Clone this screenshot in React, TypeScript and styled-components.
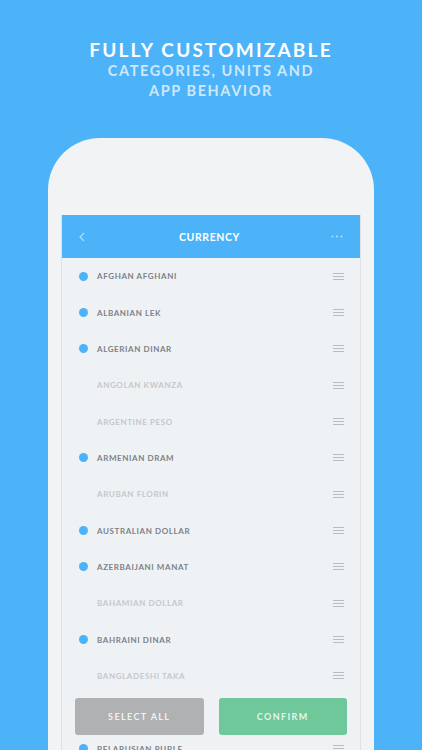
import React from 'react';
import styled, { createGlobalStyle } from 'styled-components';

const GlobalStyle = createGlobalStyle`
    html, body {
        margin: 0;
        padding: 0;
        background: #4db3f9;
    }

    body {
        font-family: Lato, "Open Sans", sans-serif;
    }
`;

const StyledPage = styled.div`
    width: 422px;
    height: 750px;
    overflow: hidden;
    background: #4db3f9;
`;

const StyledIntro = styled.header`
    padding-top: 39px;
    height: 100px;
    box-sizing: border-box;
    text-align: center;
`;

const StyledHeadline = styled.h1`
    margin: 0;
    font-size: 19px;
    font-weight: 700;
    letter-spacing: 2.2px;
    line-height: 22px;
    color: #ffffff;
`;

const StyledSubline = styled.p`
    margin: 0;
    font-size: 14.5px;
    font-weight: 700;
    letter-spacing: 1.6px;
    line-height: 19.5px;
    color: #cde8fd;
`;

const StyledPhone = styled.div`
    margin: 38px 0 0 48px;
    width: 326px;
    height: 700px;
    box-sizing: border-box;
    padding: 77px 13px 0;
    background: #f2f3f5;
    border-radius: 52px 52px 0 0;
`;

const StyledScreen = styled.div`
    position: relative;
    height: 600px;
    background: #eff2f5;
    border: 1px solid #dde1e5;
    border-top: none;
`;

const StyledNavBar = styled.div`
    height: 43px;
    display: flex;
    align-items: center;
    justify-content: space-between;
    padding: 0 16px 0 13px;
    background: #4db3f9;
    color: #ffffff;
`;

const StyledNavIcon = styled.div`
    width: 14px;
    display: flex;
    align-items: center;
    justify-content: center;
    opacity: 0.55;
`;

const StyledNavTitle = styled.div`
    font-size: 10.5px;
    font-weight: 700;
    letter-spacing: 0.6px;
`;

const StyledList = styled.ul`
    margin: 0;
    padding: 0;
    list-style: none;
`;

const StyledRow = styled.li<{ $covered?: boolean }>`
    height: 36.35px;
    display: flex;
    align-items: center;
    padding: 0 16px 0 17px;
    visibility: ${({ $covered }) => ($covered ? 'hidden' : 'visible')};
`;

const StyledDot = styled.span<{ $on: boolean }>`
    width: 9px;
    height: 9px;
    border-radius: 50%;
    margin-right: 9px;
    background: ${({ $on }) => ($on ? '#4db3f9' : 'transparent')};
`;

const StyledLabel = styled.span<{ $on: boolean }>`
    flex: 1;
    font-size: 8px;
    font-weight: 700;
    letter-spacing: 0.6px;
    color: ${({ $on }) => ($on ? '#7c8187' : '#c4c8cc')};
`;

const StyledHandle = styled.span`
    width: 11px;
    display: flex;
    flex-direction: column;
    gap: 2px;

    & > i {
        display: block;
        height: 1px;
        background: #b9bcc0;
    }
`;

const StyledActions = styled.div`
    position: absolute;
    left: 13px;
    right: 13px;
    top: 483px;
    display: flex;
    gap: 15px;
`;

const StyledButton = styled.button<{ $tone: 'grey' | 'green' }>`
    flex: 1;
    height: 37px;
    border: none;
    border-radius: 3px;
    font-family: Lato, "Open Sans", sans-serif;
    font-size: 9px;
    font-weight: 700;
    letter-spacing: 1.4px;
    color: rgba(255, 255, 255, 0.85);
    background: ${({ $tone }) => ($tone === 'grey' ? '#b0b1b3' : '#6ec899')};
`;

const currencies: [string, boolean][] = [
    ['AFGHAN AFGHANI', true],
    ['ALBANIAN LEK', true],
    ['ALGERIAN DINAR', true],
    ['ANGOLAN KWANZA', false],
    ['ARGENTINE PESO', false],
    ['ARMENIAN DRAM', true],
    ['ARUBAN FLORIN', false],
    ['AUSTRALIAN DOLLAR', true],
    ['AZERBAIJANI MANAT', true],
    ['BAHAMIAN DOLLAR', false],
    ['BAHRAINI DINAR', true],
    ['BANGLADESHI TAKA', false],
    ['BARBADIAN DOLLAR', true],
    ['BELARUSIAN RUBLE', true],
];

// the row sitting under the action buttons
const coveredIndex = 12;

export default function App() {
    return (
        <StyledPage>
            <GlobalStyle />
            <StyledIntro>
                <StyledHeadline>FULLY CUSTOMIZABLE</StyledHeadline>
                <StyledSubline>CATEGORIES, UNITS AND</StyledSubline>
                <StyledSubline>APP BEHAVIOR</StyledSubline>
            </StyledIntro>

            <StyledPhone>
                <StyledScreen>
                    <StyledNavBar>
                        <StyledNavIcon>
                            <svg width="6" height="10" viewBox="0 0 6 10">
                                <path d="M5 1 1 5l4 4" fill="none" stroke="#fff" strokeWidth="1.2" />
                            </svg>
                        </StyledNavIcon>
                        <StyledNavTitle>CURRENCY</StyledNavTitle>
                        <StyledNavIcon>
                            <svg width="12" height="3" viewBox="0 0 12 3">
                                <circle cx="1.5" cy="1.5" r="1.1" fill="#fff" />
                                <circle cx="6" cy="1.5" r="1.1" fill="#fff" />
                                <circle cx="10.5" cy="1.5" r="1.1" fill="#fff" />
                            </svg>
                        </StyledNavIcon>
                    </StyledNavBar>

                    <StyledList>
                        {currencies.map(([name, on], i) => (
                            <StyledRow key={name} $covered={i === coveredIndex}>
                                <StyledDot $on={on} />
                                <StyledLabel $on={on}>{name}</StyledLabel>
                                <StyledHandle>
                                    <i />
                                    <i />
                                    <i />
                                </StyledHandle>
                            </StyledRow>
                        ))}
                    </StyledList>

                    <StyledActions>
                        <StyledButton $tone="grey">SELECT ALL</StyledButton>
                        <StyledButton $tone="green">CONFIRM</StyledButton>
                    </StyledActions>
                </StyledScreen>
            </StyledPhone>
        </StyledPage>
    );
}
